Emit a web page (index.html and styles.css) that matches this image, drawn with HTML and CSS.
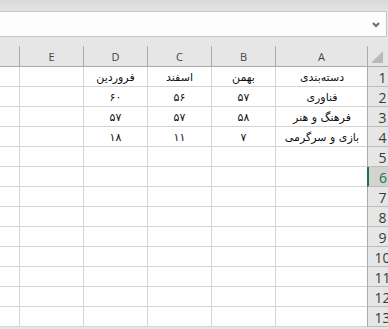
FILE: index.html
```html
<!DOCTYPE html>
<html lang="fa">
<head>
<meta charset="utf-8">
<link rel="stylesheet" href="styles.css">
</head>
<body>
<div class="top"></div>
<div class="fbar">
  <svg class="chev" width="8" height="6" viewBox="0 0 8 6"><polyline points="1,1 4,4 7,1" fill="none" stroke="#6e6e6e" stroke-width="2"/></svg>
</div>
<div class="gap"></div>
<div class="grid">
  <div class="ch"></div><div class="ch">E</div><div class="ch">D</div><div class="ch">C</div><div class="ch">B</div><div class="ch">A</div><div class="corner"><svg width="12" height="12" viewBox="0 0 12 12"><polygon points="12,0 12,12 0,12" fill="#b9b9b9"/></svg></div>

  <div class="c"></div><div class="c"></div><div class="c t">فروردین</div><div class="c t">اسفند</div><div class="c t">بهمن</div><div class="c t">دسته‌بندی</div><div class="rh">1</div>
  <div class="c"></div><div class="c"></div><div class="c t">۶۰</div><div class="c t">۵۶</div><div class="c t">۵۷</div><div class="c t">فناوری</div><div class="rh">2</div>
  <div class="c"></div><div class="c"></div><div class="c t">۵۷</div><div class="c t">۵۷</div><div class="c t">۵۸</div><div class="c t">فرهنگ و هنر</div><div class="rh">3</div>
  <div class="c"></div><div class="c"></div><div class="c t">۱۸</div><div class="c t">۱۱</div><div class="c t">۷</div><div class="c t">بازی و سرگرمی</div><div class="rh">4</div>
  <div class="c"></div><div class="c"></div><div class="c"></div><div class="c"></div><div class="c"></div><div class="c"></div><div class="rh">5</div>
  <div class="c"></div><div class="c"></div><div class="c"></div><div class="c"></div><div class="c"></div><div class="c"></div><div class="rh sel">6</div>
  <div class="c"></div><div class="c"></div><div class="c"></div><div class="c"></div><div class="c"></div><div class="c"></div><div class="rh">7</div>
  <div class="c"></div><div class="c"></div><div class="c"></div><div class="c"></div><div class="c"></div><div class="c"></div><div class="rh">8</div>
  <div class="c"></div><div class="c"></div><div class="c"></div><div class="c"></div><div class="c"></div><div class="c"></div><div class="rh">9</div>
  <div class="c"></div><div class="c"></div><div class="c"></div><div class="c"></div><div class="c"></div><div class="c"></div><div class="rh">10</div>
  <div class="c"></div><div class="c"></div><div class="c"></div><div class="c"></div><div class="c"></div><div class="c"></div><div class="rh">11</div>
  <div class="c"></div><div class="c"></div><div class="c"></div><div class="c"></div><div class="c"></div><div class="c"></div><div class="rh">12</div>
  <div class="c"></div><div class="c"></div><div class="c"></div><div class="c"></div><div class="c"></div><div class="c"></div><div class="rh">13</div>
</div>
</body>
</html>
```
FILE: styles.css
```css
html, body {
  margin: 0;
  padding: 0;
  background: #e6e6e6;
  overflow: hidden;
  width: 388px;
  height: 329px;
}
body {
  font-family: "DejaVu Sans", sans-serif;
}
.top {
  height: 11px;
  background: linear-gradient(#d8d8d8, #e4e4e4);
}
.fbar {
  height: 24px;
  border-top: 1px solid #c6c6c6;
  border-bottom: 1px solid #c6c6c6;
  border-right: 1px solid #c6c6c6;
  width: 386px;
  background: #fdfdfd;
  display: flex;
  align-items: center;
  justify-content: flex-end;
}
.chev {
  margin-right: 6px;
  margin-top: 1px;
}
.gap {
  height: 9px;
  background: #e6e6e6;
}
.grid {
  display: grid;
  grid-template-columns: 20px 64px 64px 64px 64px 92px 28px;
  grid-template-rows: 21px repeat(13, 20px);
  width: 332px;
  background: #fff;
}
.ch {
  background: #e6e6e6;
  border-right: 1px solid #ababab;
  border-bottom: 1px solid #ababab;
  font-family: "Open Sans", "DejaVu Sans", sans-serif;
  font-size: 11px;
  color: #444;
  display: flex;
  align-items: center;
  justify-content: center;
  padding-top: 1px;
  box-sizing: border-box;
}
.ch:first-child {
  border-top: 0;
}
.corner {
  background: #e6e6e6;
  border-left: 1px solid #ababab;
  border-bottom: 1px solid #ababab;
  margin-left: -1px;
  display: flex;
  align-items: flex-end;
  padding: 0 0 3px 3px;
  box-sizing: border-box;
}
.c {
  border-right: 1px solid #d4d4d4;
  border-bottom: 1px solid #d4d4d4;
  box-sizing: border-box;
  background: #fff;
}
.c:nth-child(7n+6) {
  border-right: 0;
}
.t {
  direction: rtl;
  font-size: 11px;
  color: #111;
  display: flex;
  align-items: center;
  justify-content: center;
  padding-top: 1px;
}
.rh {
  background: #e6e6e6;
  border-left: 1px solid #ababab;
  border-bottom: 1px solid #bdbdbd;
  margin-left: -1px;
  box-sizing: border-box;
  font-family: "Open Sans", "DejaVu Sans", sans-serif;
  font-size: 14px;
  color: #3a3a3a;
  display: flex;
  align-items: center;
  justify-content: center;
  padding-left: 1px;
  padding-top: 1px;
}
.rh.sel {
  background: #d3d3d3;
  border-left: 2px solid #217346;
  color: #217346;
}
```
